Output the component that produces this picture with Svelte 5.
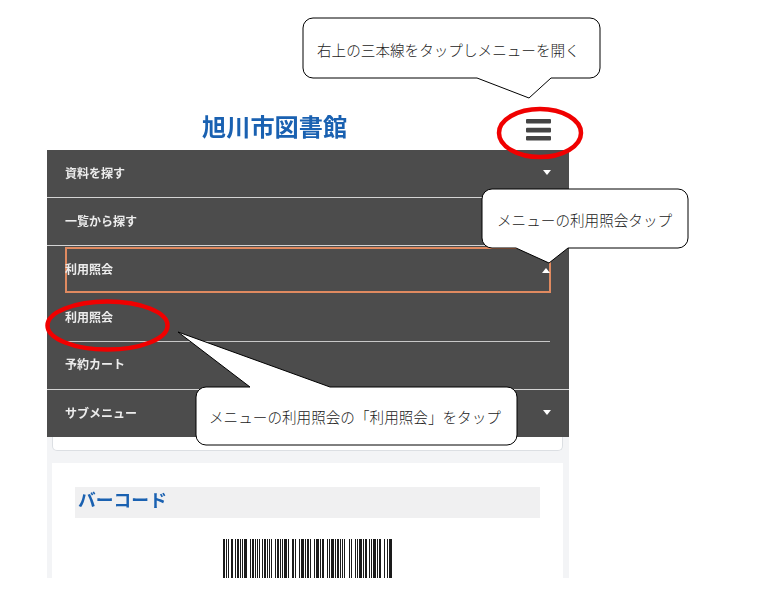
<script>
  const items = [
    { label: '資料を探す', arrow: 'down' },
    { label: '一覧から探す', arrow: 'down' },
    { label: '利用照会', arrow: 'up', focus: true },
    { label: '利用照会', sub: true, inset: true },
    { label: '予約カート', sub: true },
    { label: 'サブメニュー', arrow: 'down', last: true }
  ];

  // dark groups [start, end] read from the reference barcode; inside them thin bars alternate
  const groups = [[0,6],[8,10],[12,24],[27,37],[39,49],[52,67],[69,73],[76,89],[91,101],[104,122],[126,129],[132,144],[146,159],[161,162],[164,170]];
  const cycle = [2, 1, 1, 1, 1, 1, 3, 1, 1, 1];
  const bars = [];
  let step = 0;
  for (const [start, end] of groups) {
    let x = start;
    while (x < end) {
      const w = Math.min(cycle[step % 10], end - x);
      bars.push({ x, w });
      x += w + cycle[(step + 1) % 10];
      step += 2;
    }
  }

  const callouts = [
    {
      d: 'M313 18H590A10 10 0 0 1 600 28V68A10 10 0 0 1 590 78H551L529 98L477 78H313A10 10 0 0 1 303 68V28A10 10 0 0 1 313 18Z',
      text: '右上の三本線をタップしメニューを開く', x: 317, y: 56
    },
    {
      d: 'M492 189H678A10 10 0 0 1 688 199V238A10 10 0 0 1 678 248H568L549 263L516 248H492A10 10 0 0 1 482 238V199A10 10 0 0 1 492 189Z',
      text: 'メニューの利用照会タップ', x: 497, y: 226
    },
    {
      d: 'M206 387H250L178 332L330 387H507A10 10 0 0 1 517 397V435A10 10 0 0 1 507 445H206A10 10 0 0 1 196 435V397A10 10 0 0 1 206 387Z',
      text: 'メニューの利用照会の「利用照会」をタップ', x: 209, y: 423
    }
  ];
</script>

<div class="stage">
  <div class="shot">
    <header class="top">
      <div class="title">旭川市図書館</div>
      <svg class="burger" width="25" height="22" viewBox="0 0 25 22" aria-hidden="true">
        <rect x="0" y="0" width="25" height="4.6" rx="1" />
        <rect x="0" y="8.8" width="25" height="4.6" rx="1" />
        <rect x="0" y="17" width="25" height="4.4" rx="1" />
      </svg>
    </header>

    <nav class="menu">
      {#each items as item}
        <div class="row" class:sub={item.sub} class:inset={item.inset} class:last={item.last} class:open={item.focus}>
          <div class="cell" class:focus={item.focus}>
            <span>{item.label}</span>
            {#if item.arrow}<i class="arrow {item.arrow}"></i>{/if}
          </div>
        </div>
      {/each}
    </nav>

    <main class="body">
      <div class="card stub"></div>
      <section class="card panel">
        <h2>バーコード</h2>
        <svg class="barcode" width="170" height="40" viewBox="0 0 170 40" aria-hidden="true">
          {#each bars as b}
            <rect x={b.x} y="0" width={b.w} height="40" />
          {/each}
        </svg>
      </section>
    </main>
  </div>

  <svg class="overlay" width="768" height="614" viewBox="0 0 768 614">
    <ellipse class="ring" cx="540" cy="133" rx="41" ry="24" />
    <ellipse class="ring" cx="107.5" cy="325.5" rx="60" ry="24" />
    {#each callouts as c}
      <path class="bubble" d={c.d} />
      <text class="note" x={c.x} y={c.y}>{c.text}</text>
    {/each}
  </svg>
</div>

<style>
  :global(body) {
    margin: 0;
    background: #fff;
  }
  .stage {
    position: relative;
    width: 768px;
    height: 614px;
    overflow: hidden;
    padding: 108px 0 0 47px;
    box-sizing: border-box;
    font-family: "Noto Sans CJK JP", "Noto Sans", sans-serif;
  }
  .shot {
    width: 522px;
    height: 470px;
    overflow: hidden;
    display: flex;
    flex-direction: column;
    filter: blur(0.35px);
  }
  .top {
    height: 42px;
    flex: none;
    display: flex;
    align-items: center;
    background: #fff;
    padding-left: 155px;
    padding-right: 18px;
  }
  .title {
    font-size: 24.2px;
    font-weight: 700;
    line-height: 38px;
    color: #1a61b1;
    margin-top: -7px;
  }
  .burger {
    margin-left: auto;
    margin-top: 1px;
    fill: #444;
  }
  .menu {
    flex: none;
    background: #4c4c4c;
    color: #ececec;
    font-size: 12px;
    font-weight: 700;
  }
  .row {
    height: 48px;
    box-sizing: border-box;
    border-bottom: 1px solid #d4d4d4;
    padding: 0 18px;
    display: flex;
    align-items: center;
  }
  .row.inset {
    border-bottom: 0;
    position: relative;
  }
  .row.inset::after {
    content: "";
    position: absolute;
    left: 18px;
    right: 19px;
    bottom: 0;
    height: 1px;
    background: #c8c8c8;
  }
  .row.open {
    border-bottom: 0;
  }
  .row.last {
    height: 47px;
    border-bottom: 0;
  }
  .cell {
    flex: 1;
    align-self: stretch;
    display: flex;
    align-items: center;
    justify-content: space-between;
    margin-right: 1px;
    position: relative;
    top: -1px;
  }
  .row.sub .cell {
    top: -2px;
  }
  .cell.focus {
    top: 0;
    margin: 1px 0 0;
    height: 46px;
    align-self: flex-start;
    box-sizing: border-box;
    border: 2px solid #e08a60;
  }
  .cell.focus span {
    margin-left: -2px;
    margin-top: -4px;
  }
  .arrow {
    display: block;
    width: 0;
    height: 0;
    border-left: 4px solid transparent;
    border-right: 4px solid transparent;
    margin-right: -1px;
  }
  .arrow.down {
    border-top: 5px solid #fff;
  }
  .arrow.up {
    border-bottom: 5px solid #fff;
  }
  .body {
    flex: 1;
    background: #f3f4f6;
    padding: 0 6px 0 5px;
    display: flex;
    flex-direction: column;
    gap: 12px;
    min-height: 0;
  }
  .card {
    background: #fff;
    flex: none;
  }
  .stub {
    height: 14px;
    box-sizing: border-box;
    border: 1px solid #dcdfe3;
    border-top: 0;
    border-radius: 0 0 5px 5px;
  }
  .panel {
    flex: 1;
    min-height: 0;
    padding: 24px 23px 0;
    overflow: hidden;
    display: flex;
    flex-direction: column;
  }
  h2 {
    margin: 0;
    height: 31px;
    line-height: 25px;
    padding-left: 3px;
    background: #f0f0f1;
    font-size: 17.8px;
    font-weight: 700;
    color: #1a61b1;
    flex: none;
  }
  .barcode {
    flex: none;
    margin: 21px 0 0 148px;
    fill: #1a1a1a;
    filter: blur(0.3px);
  }
  .overlay {
    position: absolute;
    left: 0;
    top: 0;
  }
  .ring {
    fill: none;
    stroke: #f00000;
    stroke-width: 4.5;
  }
  .bubble {
    fill: #fff;
    stroke: #000;
    stroke-width: 1;
  }
  .note {
    font-size: 14.6px;
    font-weight: 300;
    fill: #222;
    font-family: "Noto Sans CJK JP", sans-serif;
  }
</style>
